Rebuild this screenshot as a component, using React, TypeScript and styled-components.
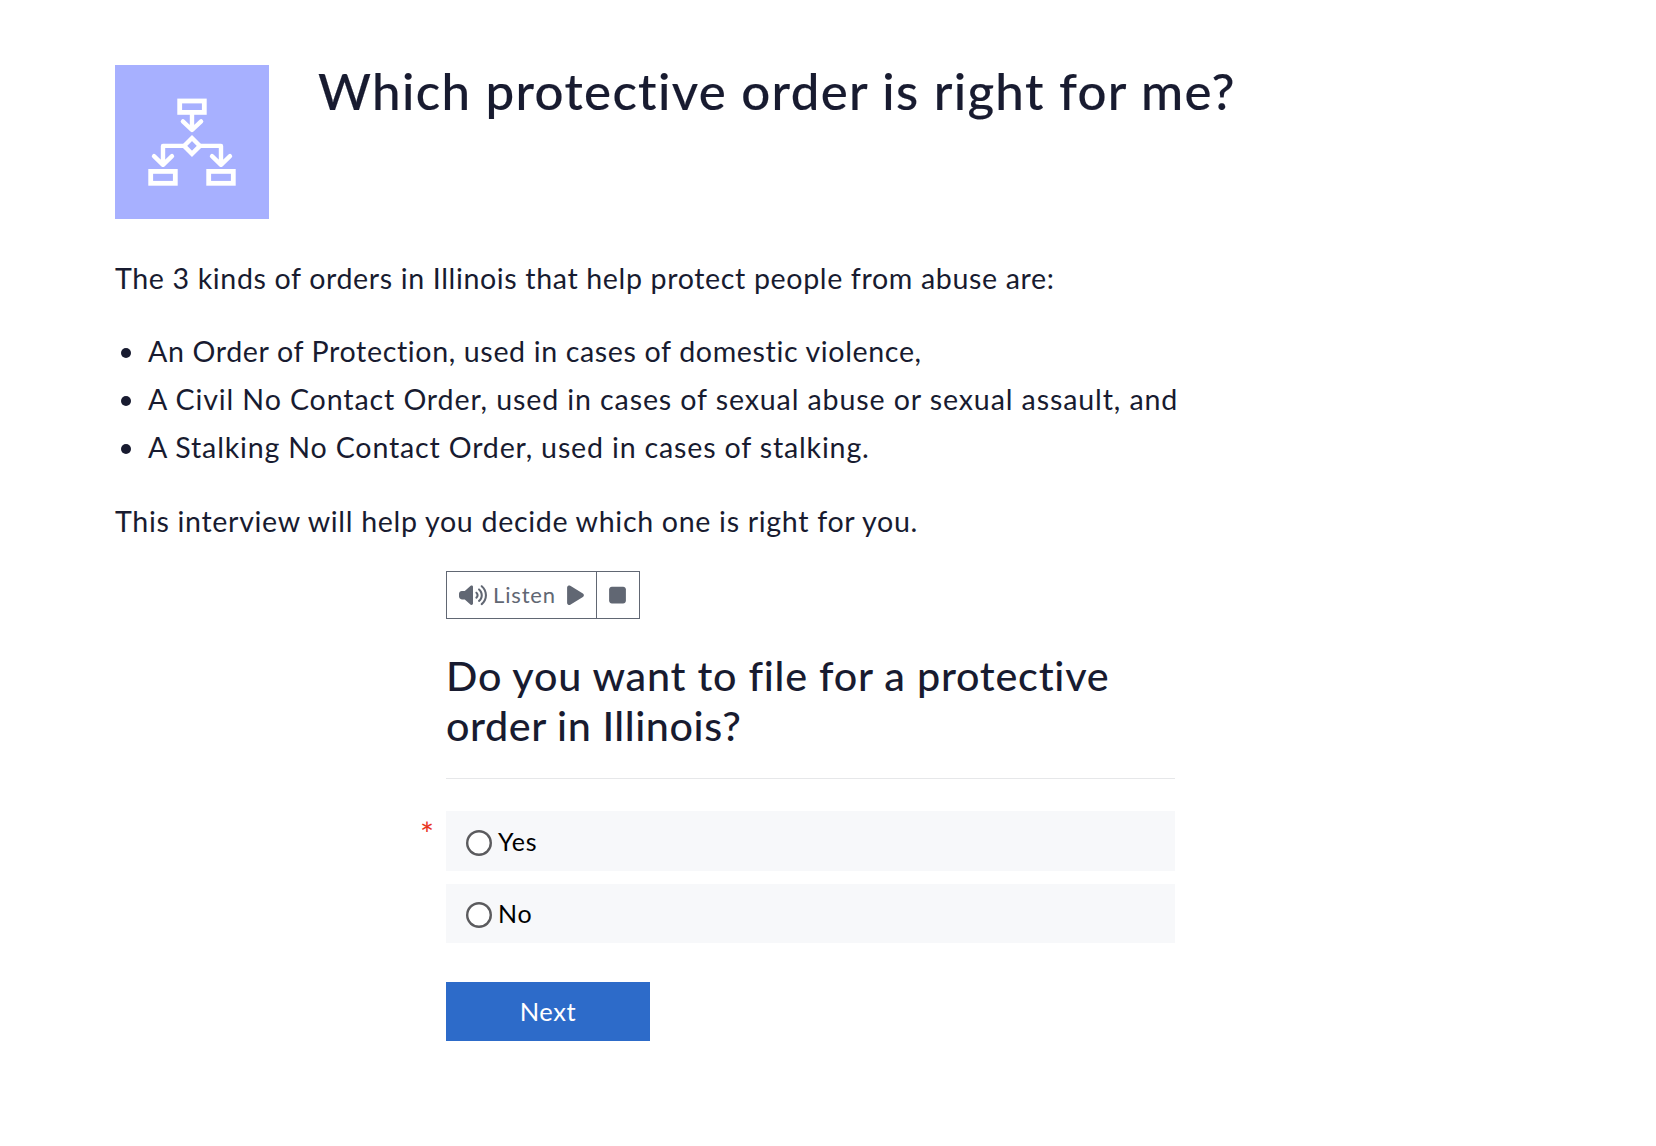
import React, { useState } from "react";
import styled, { createGlobalStyle } from "styled-components";
import { FaPlay, FaStop, FaVolumeHigh } from "react-icons/fa6";

const ink = "#181b30";
const slate = "#616773";

const GlobalStyle = createGlobalStyle`
  * {
    box-sizing: border-box;
  }

  body {
    margin: 0;
    background: #fff;
    color: ${ink};
    font-family: Lato, "Open Sans", sans-serif;
  }
`;

const Page = styled.main`
  width: 1656px;
  min-height: 1146px;
  padding: 65px 115px 0;
`;

const Header = styled.header`
  display: flex;
  align-items: flex-start;
  gap: 49px;
`;

const IconTile = styled.div`
  flex: none;
  width: 154px;
  height: 154px;
  background: #a7b0ff;
`;

const Title = styled.h1`
  margin: 0;
  font-size: 51px;
  font-weight: 500;
  line-height: 51px;
  letter-spacing: 1.33px;
  -webkit-text-stroke: 0.15px ${ink};
`;

const Intro = styled.section`
  padding-top: 35px;
  font-size: 28.6px;
  line-height: 48px;
  white-space: nowrap;
`;

const Paragraph = styled.p<{ $tracking: number }>`
  margin: 0;
  letter-spacing: ${(p) => p.$tracking}px;
`;

const OrderList = styled.ul`
  margin: 25px 0 26px;
  padding: 0;
  list-style: none;
`;

const OrderItem = styled.li<{ $tracking: number }>`
  display: flex;
  align-items: center;
  padding-left: 6px;
  letter-spacing: ${(p) => p.$tracking}px;

  &::before {
    content: "";
    width: 10px;
    height: 10px;
    margin: 3px 17px 0 0;
    border-radius: 50%;
    background: ${ink};
  }
`;

const Interview = styled.section`
  width: 729px;
  margin: 26px 0 0 331px;
`;

const AudioBar = styled.div`
  display: flex;
  width: 194px;
  height: 48px;
  border: 1px solid ${slate};
`;

const AudioButton = styled.button`
  display: flex;
  align-items: center;
  padding: 0 12px;
  border: 0;
  background: none;
  color: ${slate};
  font: 400 22px/46px Lato, "Open Sans", sans-serif;
  letter-spacing: 0.85px;

  & + & {
    border-left: 1px solid ${slate};
  }
`;

const AudioLabel = styled.span`
  width: 62px;
  margin: 0 12px 0 6px;
  text-align: left;
`;

const SpeakerIcon = styled(FaVolumeHigh)`
  width: 28px;
  height: 22.4px;
`;

const PlayIcon = styled(FaPlay)`
  width: 17px;
  height: 22.4px;
`;

const StopIcon = styled(FaStop)`
  width: 17px;
  height: 22.4px;
`;

const Question = styled.h2`
  margin: 31px 0 0;
  padding-bottom: 28px;
  border-bottom: 1px solid #e6e7e9;
  font-size: 41.3px;
  font-weight: 500;
  line-height: 50px;
`;

const QuestionLine = styled.span<{ $tracking: number }>`
  display: block;
  white-space: nowrap;
  letter-spacing: ${(p) => p.$tracking}px;
`;

const Answers = styled.div`
  display: grid;
  position: relative;
  grid-template-rows: 60px 59px;
  gap: 13px;
  margin-top: 32px;
`;

const RequiredMark = styled.span`
  position: absolute;
  left: -26px;
  top: 4px;
  color: #e8341c;
  font: 400 33px/36px Lato, sans-serif;
`;

const Answer = styled.label`
  display: flex;
  align-items: center;
  padding: 0 0 1px 20px;
  background: #f7f8fa;
  color: #000;
  font-size: 25px;
  letter-spacing: 0.8px;
`;

const Radio = styled.input`
  appearance: none;
  width: 26px;
  height: 26px;
  margin: 4px 6px 0 0;
  border-radius: 50%;
  background: #fff;
  box-shadow: inset 0 0 0 2.4px #5b5b5e;

  &:checked {
    background: radial-gradient(#2d6bc9 45%, #fff 50%);
  }
`;

const NextButton = styled.button`
  display: block;
  width: 204px;
  height: 59px;
  margin-top: 39px;
  padding: 0;
  border: 0;
  background: #2d6bc9;
  color: #fff;
  font: 400 25.5px/59px Lato, "Open Sans", sans-serif;
  letter-spacing: 0.6px;
`;

function FlowchartIcon() {
  return (
    <svg width="154" height="154" viewBox="0 0 154 154" fill="none" stroke="#fff" strokeWidth="4.4" aria-hidden="true">
      <rect x="64.7" y="36" width="24.6" height="11.4" strokeWidth="4.8" />
      <rect x="35.7" y="106.4" width="24.6" height="11.9" strokeWidth="4.8" />
      <rect x="93.7" y="106.4" width="24.6" height="11.9" strokeWidth="4.8" />
      <path d="M77 73 84.9 80.9 77 88.8 69.1 80.9Z" />
      <g strokeLinecap="round" strokeLinejoin="round">
        <path d="M77 49V64.5M67.9 56.4 77 65 86.1 56.4" />
        <path d="M68.5 80.9H48V99.5M39 91.2 48 99.8 57 91.2" />
        <path d="M85.5 80.9H106V99.5M97 91.2 106 99.8 115 91.2" />
      </g>
    </svg>
  );
}

const choices = ["Yes", "No"];

export default function App() {
  const [answer, setAnswer] = useState<string | null>(null);

  return (
    <>
      <GlobalStyle />
      <Page>
        <Header>
          <IconTile>
            <FlowchartIcon />
          </IconTile>
          <Title>Which protective order is right for me?</Title>
        </Header>

        <Intro>
          <Paragraph $tracking={0.63}>
            The 3 kinds of orders in Illinois that help protect people from abuse are:
          </Paragraph>
          <OrderList>
            <OrderItem $tracking={0.63}>An Order of Protection, used in cases of domestic violence,</OrderItem>
            <OrderItem $tracking={0.875}>
              A Civil No Contact Order, used in cases of sexual abuse or sexual assault, and
            </OrderItem>
            <OrderItem $tracking={0.82}>A Stalking No Contact Order, used in cases of stalking.</OrderItem>
          </OrderList>
          <Paragraph $tracking={0.67}>This interview will help you decide which one is right for you.</Paragraph>
        </Intro>

        <Interview>
          <AudioBar>
            <AudioButton type="button">
              <SpeakerIcon />
              <AudioLabel>Listen</AudioLabel>
              <PlayIcon />
            </AudioButton>
            <AudioButton type="button" aria-label="Stop">
              <StopIcon />
            </AudioButton>
          </AudioBar>

          <Question>
            <QuestionLine $tracking={0.77}>Do you want to file for a protective</QuestionLine>
            <QuestionLine $tracking={0.57}>order in Illinois?</QuestionLine>
          </Question>

          <Answers>
            <RequiredMark>*</RequiredMark>
            {choices.map((choice) => (
              <Answer key={choice}>
                <Radio
                  type="radio"
                  name="file-order"
                  checked={answer === choice}
                  onChange={() => setAnswer(choice)}
                />
                {choice}
              </Answer>
            ))}
          </Answers>

          <NextButton type="button">Next</NextButton>
        </Interview>
      </Page>
    </>
  );
}
